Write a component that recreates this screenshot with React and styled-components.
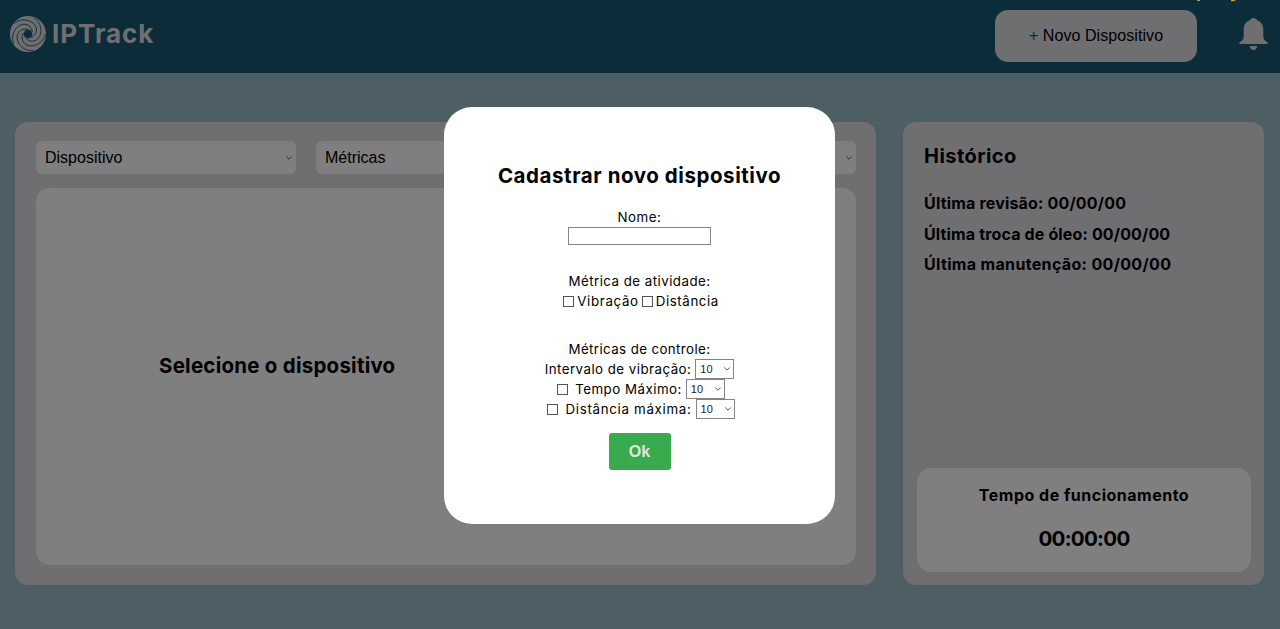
import React from "react";
import styled, { createGlobalStyle } from "styled-components";

const GlobalStyle = createGlobalStyle`
  *, *::before, *::after { box-sizing: border-box; }
  html, body { margin: 0; height: 100%; overflow: hidden; }
  body { background: #9cbcca; color: #000; font-family: Inter, "Open Sans", sans-serif; }
  h1, h2, p { margin: 0; }
`;

const Page = styled.div`
  height: 629px;
  display: flex;
  flex-direction: column;
  background: #9cbcca;
`;

const Header = styled.header`
  height: 73px;
  flex: none;
  display: flex;
  align-items: flex-start;
  padding: 10px 12px 0 9px;
  background: linear-gradient(#165c78, #165870 60%);
`;

const Brand = styled.div`
  display: flex;
  align-items: center;
  height: 47px;
  gap: 5px;
  flex: 1;
  color: #dedee2;
`;

const BrandName = styled.span`
  font: 700 26px/30px Inter, sans-serif;
  letter-spacing: 0.95px;
  white-space: nowrap;
`;

const NewDevice = styled.button`
  width: 202px;
  height: 52px;
  margin-right: 42px;
  padding: 0;
  border: 0;
  border-radius: 13px;
  background: #dedee2;
  color: #000;
  font: 16px "Liberation Sans", Arial, sans-serif;
  letter-spacing: 0.07px;
`;

const Plus = styled.span`
  color: #165870;
`;

const Bell = styled.svg`
  display: block;
  margin-top: 7px;
`;

const Main = styled.main`
  display: flex;
  gap: 27px;
  padding: 49px 16px 0 15px;
`;

const Card = styled.section`
  width: ${(p) => p.$width}px;
  height: 463px;
  display: flex;
  flex-direction: column;
  padding: ${(p) => p.$pad};
  border-radius: 13px;
  background: #dedee3;
`;

const Filters = styled.div`
  display: flex;
  gap: 20px;
  margin-bottom: 14px;
`;

const FilterBox = styled.button`
  flex: 1;
  height: 33px;
  display: flex;
  align-items: center;
  justify-content: space-between;
  padding: 0 3px 0 9px;
  border: 0;
  border-radius: 6px;
  background: #fff;
  color: #000;
  font: 16px "Liberation Sans", Arial, sans-serif;
`;

const Canvas = styled.div`
  height: 377px;
  display: flex;
  align-items: center;
  padding: 0 0 21px 123px;
  border-radius: 14px;
  background: #fff;
`;

const Line = styled.p`
  font-size: ${(p) => p.$size}px;
  font-weight: ${(p) => p.$weight || 400};
  line-height: ${(p) => p.$line}px;
  letter-spacing: ${(p) => p.$track || 0}px;
  white-space: nowrap;
`;

const HistoryList = styled.div`
  padding: 15px 0 0 7px;
  flex: 1;
`;

const Records = styled.div`
  margin-top: 17px;
`;

const Uptime = styled.div`
  height: 104px;
  padding-top: 12px;
  text-align: center;
  border-radius: 14px;
  background: #fff;
`;

const Backdrop = styled.div`
  position: fixed;
  inset: 0;
  display: flex;
  justify-content: center;
  align-items: flex-start;
  padding: 107px 1px 0 0;
  background: rgba(0, 0, 0, 0.5);
`;

const Modal = styled.form`
  width: 391px;
  height: 417px;
  display: flex;
  flex-direction: column;
  align-items: center;
  padding-top: 54px;
  border-radius: 28px;
  background: #fff;
`;

const Group = styled.div`
  display: flex;
  flex-direction: column;
  align-items: center;
  margin-top: ${(p) => p.$top}px;
`;

const NameInput = styled.input`
  width: 143px;
  height: 18px;
  margin: 0;
  padding: 1px 2px;
  border: 1px solid #858585;
  background: #fff;
`;

const Row = styled.label`
  height: 20px;
  display: flex;
  align-items: center;
  gap: ${(p) => p.$gap}px;
  padding-left: ${(p) => p.$inset || 0}px;
`;

const Check = styled.input`
  appearance: none;
  width: 11px;
  height: 11px;
  margin: 0 ${(p) => p.$after || 0}px 0 0;
  border: 1px solid #555;
  background: #fff;
`;

const SmallSelect = styled.button`
  width: 39px;
  height: 20px;
  display: flex;
  align-items: center;
  justify-content: space-between;
  padding: 0 2px 0 4px;
  border: 1px solid #858585;
  border-radius: 0;
  background: #fff;
  color: #222;
  font: 11px "Liberation Sans", Arial, sans-serif;
`;

const OkButton = styled.button`
  width: 62px;
  height: 37px;
  margin-top: 14px;
  padding: 0;
  border: 0;
  border-radius: 3px;
  background: #3aaa4e;
  color: #dfe6e0;
  font: 700 16px "Liberation Sans", Arial, sans-serif;
`;

const EdgeMarks = styled.svg`
  position: fixed;
  top: 0;
  left: 1196px;
`;

function Chevron() {
  return (
    <svg width="8" height="6" viewBox="0 0 8 6" fill="none" stroke="#555" strokeWidth="1">
      <path d="M1.3 1.5 4 4.2 6.7 1.5" />
    </svg>
  );
}

const BLADES = [20, 92, 164, 236, 308];

function Swirl() {
  return (
    <svg width="38" height="38" viewBox="-19 -19 38 38">
      <circle r="18" fill="#dedee2" />
      <circle r="4.4" fill="#165870" />
      <g fill="none" stroke="#165870" strokeWidth="0.85" strokeLinecap="round">
        {BLADES.map((a) => (
          <path key={a} transform={`rotate(${a})`} d="M4.500 2C9.500 -3 7 -11 -.5 -12.500C-7.500 -13.800 -13.500 -10.500 -16.500 -5.500" />
        ))}
      </g>
    </svg>
  );
}

function Filter({ label }) {
  return (
    <FilterBox type="button">
      <span>{label}</span>
      <Chevron />
    </FilterBox>
  );
}

function NumberSelect() {
  return (
    <SmallSelect type="button">
      <span>10</span>
      <Chevron />
    </SmallSelect>
  );
}

export default function App() {
  return (
    <>
      <GlobalStyle />
      <Page>
        <Header>
          <Brand>
            <Swirl />
            <BrandName>IPTrack</BrandName>
          </Brand>
          <NewDevice type="button"><Plus>+</Plus> Novo Dispositivo</NewDevice>
          <Bell width="29" height="34" viewBox="0 0 29 34" fill="#dedee2">
            <path d="M14.500 1C16 1 17.300 2 18.200 3.200C22.300 4.800 24.300 8 24.300 12.500V19.500C24.500 22.500 26 24.200 28.500 25.300V27H.5V25.300C3 24.200 4.500 22.500 4.700 19.500V12.500C4.700 8 6.700 4.800 10.800 3.200C11.700 2 13 1 14.500 1Z" />
            <path d="M10.800 29H18.200C18.200 31.200 16.700 33 14.500 33S10.800 31.200 10.800 29Z" />
          </Bell>
        </Header>
        <Main>
          <Card $width={861} $pad="19px 20px 20px 21px">
            <Filters>
              <Filter label="Dispositivo" />
              <Filter label="Métricas" />
              <Filter />
            </Filters>
            <Canvas>
              <Line as="h2" $size={20.5} $weight={700} $line={30} $track={0.24}>Selecione o dispositivo</Line>
            </Canvas>
          </Card>
          <Card $width={361} $pad="4px 13px 13px 14px">
            <HistoryList>
              <Line as="h2" $size={20} $weight={650} $line={30} $track={0.45}>Histórico</Line>
              <Records>
                <Line $size={16} $weight={650} $line={30.5} $track={0.18}>Última revisão: 00/00/00</Line>
                <Line $size={16} $weight={650} $line={30.5} $track={0.15}>Última troca de óleo: 00/00/00</Line>
                <Line $size={16} $weight={650} $line={30.5} $track={0.34}>Última manutenção: 00/00/00</Line>
              </Records>
            </HistoryList>
            <Uptime>
              <Line $size={16} $weight={650} $line={30} $track={0.5}>Tempo de funcionamento</Line>
              <Line $size={20.5} $weight={650} $line={57} $track={-0.7}>00:00:00</Line>
            </Uptime>
          </Card>
        </Main>
      </Page>
      <Backdrop>
        <Modal>
          <Line as="h1" $size={20.5} $weight={700} $line={30} $track={0.57}>Cadastrar novo dispositivo</Line>
          <Group $top={16}>
            <Line $size={13.3} $line={20} $track={0.55}>Nome:</Line>
            <NameInput aria-label="Nome" />
          </Group>
          <Group $top={26}>
            <Line $size={13.3} $line={20} $track={0.47}>Métrica de atividade:</Line>
            <Row $gap={3} $inset={3}>
              <Check type="checkbox" />
              <Line as="span" $size={13.3} $line={20} $track={0.68}>Vibração</Line>
              <Check type="checkbox" />
              <Line as="span" $size={13.3} $line={20} $track={0.58}>Distância</Line>
            </Row>
          </Group>
          <Group $top={28}>
            <Line $size={13.3} $line={20} $track={0.4}>Métricas de controle:</Line>
            <Row $gap={4}>
              <Line as="span" $size={13.3} $line={20} $track={0.47}>Intervalo de vibração:</Line>
              <NumberSelect />
            </Row>
            <Row $gap={4} $inset={3}>
              <Check type="checkbox" $after={3} />
              <Line as="span" $size={13.3} $line={20} $track={0.5}>Tempo Máximo:</Line>
              <NumberSelect />
            </Row>
            <Row $gap={4} $inset={3}>
              <Check type="checkbox" $after={3} />
              <Line as="span" $size={13.3} $line={20} $track={0.7}>Distância máxima:</Line>
              <NumberSelect />
            </Row>
          </Group>
          <OkButton type="button">Ok</OkButton>
        </Modal>
      </Backdrop>
      <EdgeMarks width="42" height="2" viewBox="0 0 42 2" fill="#c9a030">
        <path d="M1 0H4V1H1ZM35 0H40L38 1.300H35Z" />
      </EdgeMarks>
    </>
  );
}
